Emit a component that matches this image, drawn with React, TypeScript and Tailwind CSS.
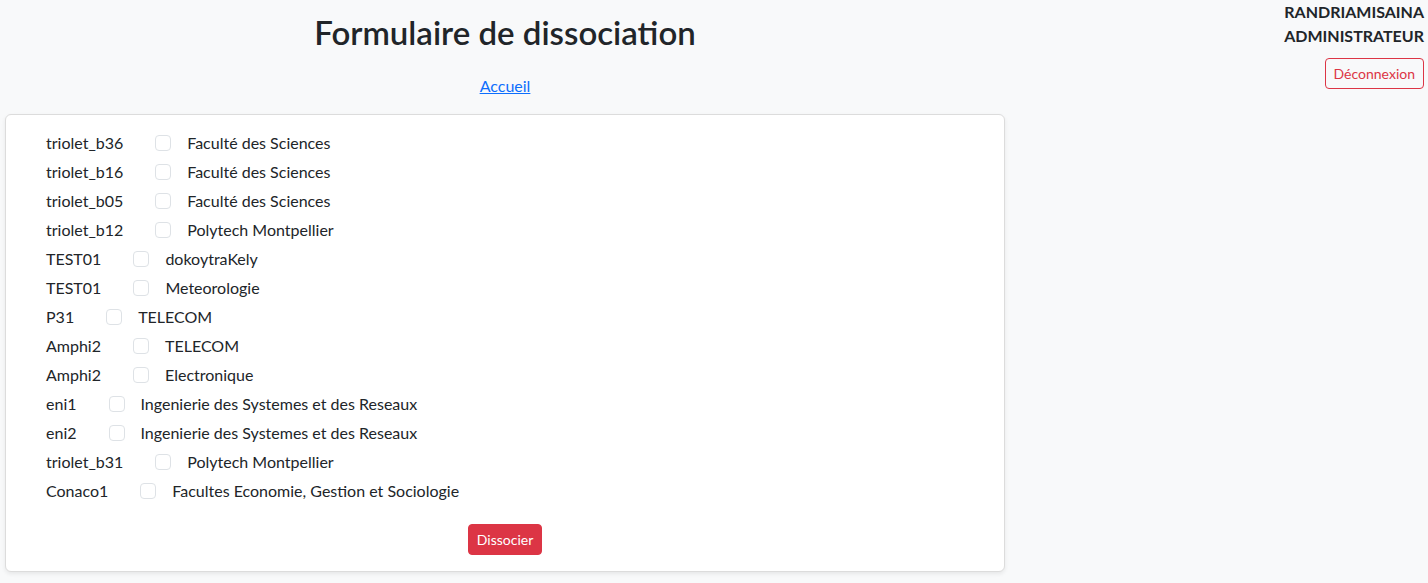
import React from "react";

const rows: [string, string][] = [
  ["triolet_b36", "Faculté des Sciences"],
  ["triolet_b16", "Faculté des Sciences"],
  ["triolet_b05", "Faculté des Sciences"],
  ["triolet_b12", "Polytech Montpellier"],
  ["TEST01", "dokoytraKely"],
  ["TEST01", "Meteorologie"],
  ["P31", "TELECOM"],
  ["Amphi2", "TELECOM"],
  ["Amphi2", "Electronique"],
  ["eni1", "Ingenierie des Systemes et des Reseaux"],
  ["eni2", "Ingenierie des Systemes et des Reseaux"],
  ["triolet_b31", "Polytech Montpellier"],
  ["Conaco1", "Facultes Economie, Gestion et Sociologie"],
];

export default function App() {
  return (
    <div className="min-h-screen bg-[#f8f9fa] font-['Lato',sans-serif] text-[16px] leading-6 text-[#212529] flex">
      <div className="w-[1005px] pl-[5px] flex flex-col">
        <h2 className="mt-3 text-center text-[33px] leading-[40px] font-semibold">Formulaire de dissociation</h2>
        <div className="mt-[22px] text-center">
          <a href="#" className="text-[#0d6efd] underline">Accueil</a>
        </div>
        <div className="mt-4 bg-white border border-[#dcdcdc] rounded-md shadow-[0_2px_4px_rgba(0,0,0,0.075)] pt-[13px] pb-4 px-4">
          <div className="pl-6">
            {rows.map(([name, label], i) => (
              <div key={i} className="flex items-center h-[29px]">
                <span>{name}</span>
                <input
                  type="checkbox"
                  className="ml-8 mr-4 appearance-none w-4 h-4 border border-[#dee2e6] rounded bg-white"
                />
                <span>{label}</span>
              </div>
            ))}
          </div>
          <div className="mt-[19px] flex justify-center">
            <button className="bg-[#dc3545] text-white text-sm leading-[21px] px-2 py-1 rounded border border-[#dc3545]">
              Dissocier
            </button>
          </div>
        </div>
      </div>
      <div className="flex-1 pr-1 flex flex-col items-end">
        <div className="font-bold text-right">RANDRIAMISAINA</div>
        <div className="font-bold text-right">ADMINISTRATEUR</div>
        <button className="mt-[10px] border border-[#dc3545] text-[#dc3545] text-sm leading-[21px] px-2 py-1 rounded bg-transparent">
          Déconnexion
        </button>
      </div>
    </div>
  );
}
